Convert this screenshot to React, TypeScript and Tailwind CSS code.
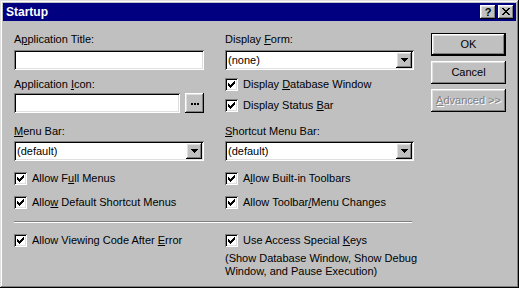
import React from "react";

const raised =
  "shadow-[inset_-1px_-1px_0_#000,inset_1px_1px_0_#fff,inset_-2px_-2px_0_#808080,inset_2px_2px_0_#dfdfdf]";
const sunken =
  "shadow-[inset_1px_1px_0_#808080,inset_-1px_-1px_0_#fff,inset_2px_2px_0_#000,inset_-2px_-2px_0_#dfdfdf]";

function Pixels({ rows, color = "#000" }: { rows: string[]; color?: string }) {
  const w = rows[0].length;
  const h = rows.length;
  return (
    <svg width={w} height={h} viewBox={`0 0 ${w} ${h}`} shapeRendering="crispEdges" className="block">
      {rows.flatMap((r, y) =>
        r.split("").map((c, x) => (c === "#" ? <rect key={`${x}-${y}`} x={x} y={y} width={1} height={1} fill={color} /> : null))
      )}
    </svg>
  );
}

const CHECK = ["......#", ".....##", "#...###", "##.###.", "#####..", ".###...", "..#...."];
const XGLYPH = ["##....##", ".##..##.", "..####..", "...##...", "..####..", ".##..##.", "##....##"];
const ARROW = ["#######", ".#####.", "..###..", "...#..."];

function U({ children }: { children: React.ReactNode }) {
  return <span className="underline decoration-1 underline-offset-[1px]">{children}</span>;
}

function Check({ children, className = "" }: { children: React.ReactNode; className?: string }) {
  return (
    <div className={`flex items-center h-[13px] gap-[5px] ${className}`}>
      <div className={`w-[13px] h-[13px] bg-white ${sunken} flex items-center justify-center shrink-0`}>
        <Pixels rows={CHECK} />
      </div>
      <span className="whitespace-nowrap">{children}</span>
    </div>
  );
}

function Label({ children, className = "" }: { children: React.ReactNode; className?: string }) {
  return <div className={`h-[13px] whitespace-nowrap ${className}`}>{children}</div>;
}

function TextBox({ className = "" }: { className?: string }) {
  return <div className={`h-[20px] bg-white ${sunken} ${className}`} />;
}

function Combo({ value, className = "" }: { value: string; className?: string }) {
  return (
    <div className={`h-[20px] bg-white ${sunken} flex items-center p-[2px] ${className}`}>
      <span className="flex-1 pl-[1px]">{value}</span>
      <div className={`w-[16px] h-[16px] bg-[#c0c0c0] ${raised} flex items-center justify-center`}>
        <Pixels rows={ARROW} />
      </div>
    </div>
  );
}

export default function App() {
  return (
    <div
      className={`w-[519px] h-[288px] bg-[#c0c0c0] p-[3px] flex flex-col text-[11px] leading-[13px] text-black font-['Liberation_Sans',Arial,sans-serif] shadow-[inset_-1px_-1px_0_#000,inset_1px_1px_0_#dfdfdf,inset_-2px_-2px_0_#808080,inset_2px_2px_0_#fff]`}
    >
      {/* Title bar */}
      <div className="h-[18px] bg-[#000080] flex items-center pl-[3px] pr-[2px] shrink-0">
        <span className="font-bold text-white text-[12px] leading-[18px]">Startup</span>
        <div className="ml-auto flex gap-[2px]">
          <div className={`w-[16px] h-[14px] bg-[#c0c0c0] ${raised} flex items-center justify-center font-bold text-[11px] leading-[14px] pb-[1px]`}>
            ?
          </div>
          <div className={`w-[16px] h-[14px] bg-[#c0c0c0] ${raised} flex items-center justify-center pb-[1px]`}>
            <Pixels rows={XGLYPH} />
          </div>
        </div>
      </div>

      {/* Body */}
      <div className="flex pl-[11px] pt-[12px]">
        <div className="flex flex-col">
          <div className="flex gap-[21px]">
            {/* Left column */}
            <div className="w-[190px] flex flex-col">
              <Label>
                A<U>p</U>plication Title:
              </Label>
              <TextBox className="mt-[4px]" />
              <Label className="mt-[8px]">
                Application <U>I</U>con:
              </Label>
              <div className="mt-[2px] flex gap-[5px] h-[20px]">
                <TextBox className="flex-1" />
                <div className={`w-[19px] h-[20px] bg-[#c0c0c0] ${raised} flex items-center justify-center gap-[1px] pt-[2px]`}>
                  <div className="w-[2px] h-[2px] bg-black" />
                  <div className="w-[2px] h-[2px] bg-black" />
                  <div className="w-[2px] h-[2px] bg-black" />
                </div>
              </div>
              <Label className="mt-[12px]">
                <U>M</U>enu Bar:
              </Label>
              <Combo value="(default)" className="mt-[3px]" />
              <Check className="mt-[11px]">
                Allow F<U>u</U>ll Menus
              </Check>
              <Check className="mt-[11px]">
                Allo<U>w</U> Default Shortcut Menus
              </Check>
            </div>

            {/* Right column */}
            <div className="w-[189px] flex flex-col">
              <Label>
                Display <U>F</U>orm:
              </Label>
              <Combo value="(none)" className="mt-[4px]" />
              <Check className="mt-[8px]">
                Display <U>D</U>atabase Window
              </Check>
              <Check className="mt-[8px]">
                Display Status <U>B</U>ar
              </Check>
              <Label className="mt-[13px]">
                <U>S</U>hortcut Menu Bar:
              </Label>
              <Combo value="(default)" className="mt-[3px]" />
              <Check className="mt-[11px]">
                A<U>l</U>low Built-in Toolbars
              </Check>
              <Check className="mt-[11px]">
                Allow Toolbar<U>/</U>Menu Changes
              </Check>
            </div>
          </div>

          {/* Separator */}
          <div className="mt-[12px] w-[398px] border-t border-t-[#808080] border-b border-b-white" />

          {/* Bottom */}
          <div className="mt-[11px] flex gap-[21px]">
            <div className="w-[190px]">
              <Check>
                Allow Viewing Code After <U>E</U>rror
              </Check>
            </div>
            <div className="w-[189px] flex flex-col">
              <Check>
                Use Access Special <U>K</U>eys
              </Check>
              <div className="mt-[5px] whitespace-nowrap">
                <div className="h-[13px]">(Show Database Window, Show Debug</div>
                <div className="h-[13px]">Window, and Pause Execution)</div>
              </div>
            </div>
          </div>
        </div>

        {/* Buttons */}
        <div className="ml-[17px] flex flex-col gap-[5px]">
          <div className={`w-[75px] h-[23px] border border-black bg-[#c0c0c0] ${raised} flex items-center justify-center`}>
            OK
          </div>
          <div className={`w-[75px] h-[23px] bg-[#c0c0c0] ${raised} flex items-center justify-center`}>Cancel</div>
          <div
            className={`w-[75px] h-[23px] bg-[#c0c0c0] ${raised} flex items-center justify-center text-[#808080] [text-shadow:1px_1px_0_#fff]`}
          >
            <span>
              <U>A</U>dvanced &gt;&gt;
            </span>
          </div>
        </div>
      </div>
    </div>
  );
}
